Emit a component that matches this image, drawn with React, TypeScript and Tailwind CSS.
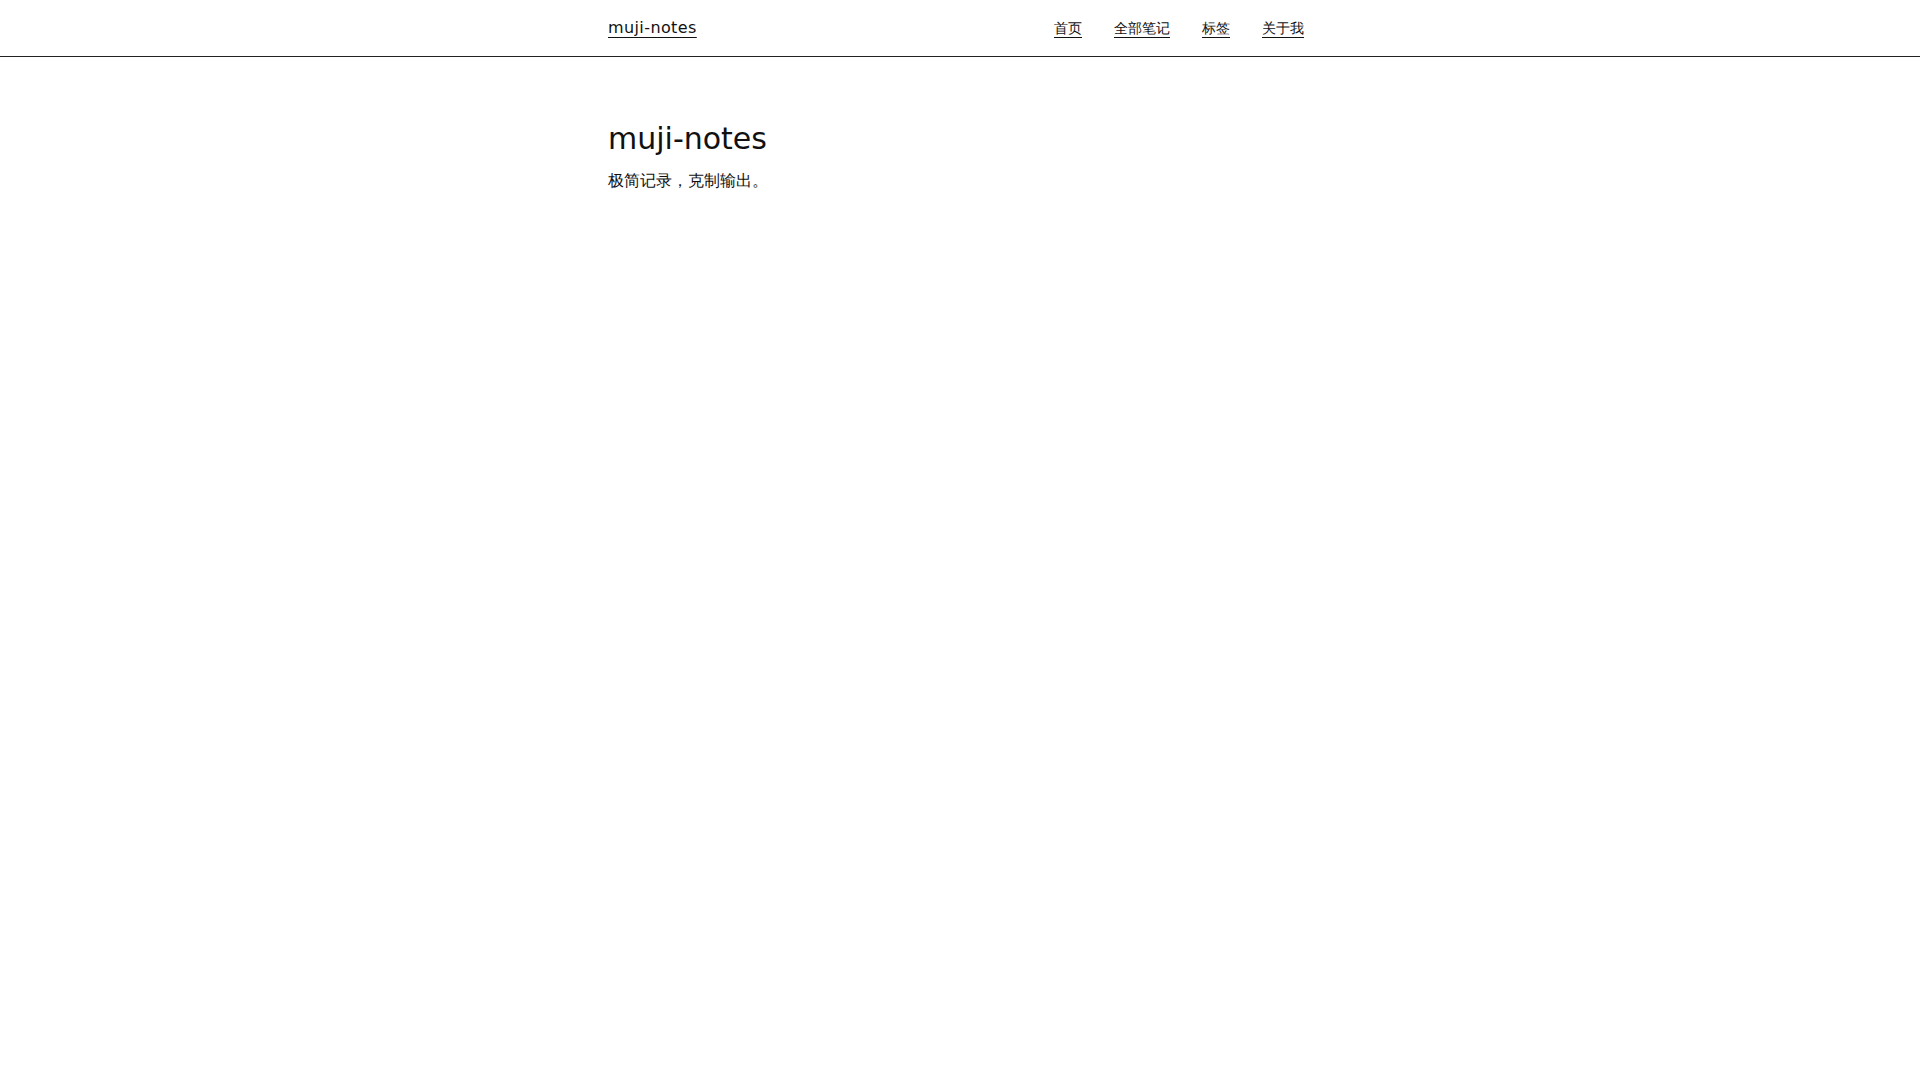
import React from 'react';

const NAV_ITEMS = ['首页', '全部笔记', '标签', '关于我'];

const App: React.FC = () => {
  return (
    <div className="min-h-screen bg-white text-[#111] font-['DejaVu_Sans',sans-serif]">
      {/* Header */}
      <header className="border-b border-[#222]">
        <div className="mx-auto w-[704px] h-14 flex items-center justify-between">
          <a href="#" className="text-[16px] tracking-wide underline underline-offset-4">muji-notes</a>
          <nav className="mr-2 flex items-center gap-8 text-[14px]">
            {NAV_ITEMS.map(item => (
              <a key={item} href="#" className="underline underline-offset-4">{item}</a>
            ))}
          </nav>
        </div>
      </header>

      {/* Intro */}
      <main className="mx-auto w-[704px] pt-16">
        <h1 className="text-[30px] leading-[36px]">muji-notes</h1>
        <p className="mt-3 text-[16px]">极简记录，克制输出。</p>
      </main>
    </div>
  );
};

export default App;
